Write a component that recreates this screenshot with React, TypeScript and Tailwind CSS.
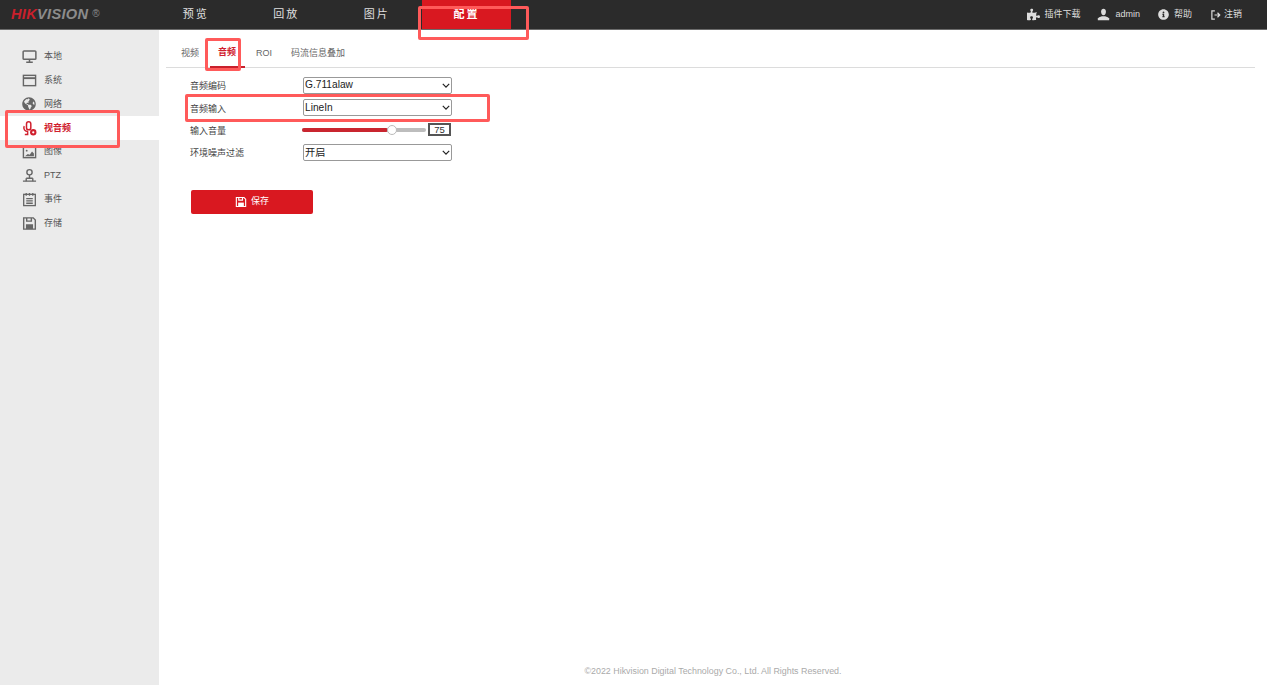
import React from 'react'
import { FaPuzzlePiece, FaInfoCircle, FaGlobeAmericas } from 'react-icons/fa'

const font = "font-['Liberation_Sans','Noto_Sans_CJK_SC',sans-serif]"

const iconCls = 'w-[15px] h-[15px]'

function Monitor() {
  return (
    <svg viewBox="0 0 16 16" className={iconCls} fill="none" stroke="#666" strokeWidth="1.6">
      <rect x="1.2" y="2" width="13.6" height="9" rx="1" />
      <path d="M8 11v2.4M4.5 14h7" />
    </svg>
  )
}

function WindowIcon() {
  return (
    <svg viewBox="0 0 16 16" className={iconCls} fill="none" stroke="#666" strokeWidth="1.5">
      <rect x="1.5" y="2.5" width="13" height="11" />
      <path d="M1.5 5.5h13" strokeWidth="2" />
    </svg>
  )
}

function Mic() {
  return (
    <svg viewBox="0 0 16 16" className={iconCls} fill="none" stroke="#d0202e" strokeWidth="1.6">
      <rect x="4.8" y="0.8" width="4.6" height="8.6" rx="2.3" />
      <path d="M2.4 5.5c-1.4 3 .6 5.6 4 5.6M6 11v3.5H3" />
      <circle cx="12" cy="12" r="3.4" fill="#d0202e" stroke="none" />
      <circle cx="12" cy="12" r="1.2" fill="#fff" stroke="none" />
    </svg>
  )
}

function ImageIcon() {
  return (
    <svg viewBox="0 0 16 16" className={iconCls} fill="none" stroke="#666" strokeWidth="1.5">
      <rect x="1.5" y="2.5" width="13" height="11" />
      <circle cx="5" cy="6" r="1" fill="#666" stroke="none" />
      <path d="M3.2 12l3-2.5 2 1 2.5-3.5 2 2V12z" fill="#666" stroke="none" />
    </svg>
  )
}

function Ptz() {
  return (
    <svg viewBox="0 0 16 16" className={iconCls} fill="none" stroke="#666" strokeWidth="1.5">
      <circle cx="8" cy="4.5" r="2.8" />
      <path d="M8 7.5v3M4.5 11h7M1 14h14" />
      <path d="M4.5 11v3M11.5 11v3" />
    </svg>
  )
}

function Calendar() {
  return (
    <svg viewBox="0 0 16 16" className={iconCls} fill="none" stroke="#666" strokeWidth="1.4">
      <rect x="1.8" y="2.5" width="12.4" height="12" />
      <path d="M4.5 1v3M8 1v3M11.5 1v3M4.5 7h7M4.5 9.5h7M4.5 12h7" />
    </svg>
  )
}

function Disk({ color = '#666', className = iconCls }: { color?: string; className?: string }) {
  return (
    <svg viewBox="0 0 16 16" className={className} fill="none" stroke={color} strokeWidth="1.5">
      <path d="M1.8 2h10.2l2.2 2.2v9.8H1.8z" />
      <path d="M5 2v3.5h5V2" />
      <rect x="4.2" y="8.8" width="7.6" height="5.2" fill={color} stroke="none" />
    </svg>
  )
}

function UserIcon() {
  return (
    <svg viewBox="0 0 16 16" className="w-[13px] h-[13px]" fill="#ddd">
      <path d="M5 4.5C5 2.5 6.3 1 8 1s3 1.5 3 3.5S9.8 9 8 9 5 6.5 5 4.5z" />
      <path d="M1 15v-2c0-1.4 3-2.4 5-3h4c2 .6 5 1.6 5 3v2z" />
    </svg>
  )
}

function LogoutIcon() {
  return (
    <svg viewBox="0 0 16 16" className="w-[12px] h-[12px]" fill="none" stroke="#ddd" strokeWidth="1.6">
      <path d="M6.5 2.5H2.5v11h4" />
      <path d="M6 8h6.5M10 5l3 3-3 3" />
    </svg>
  )
}

const sideItems = [
  { label: '本地', icon: <Monitor /> },
  { label: '系统', icon: <WindowIcon /> },
  { label: '网络', icon: <FaGlobeAmericas className="w-[14px] h-[14px] text-[#666]" /> },
  { label: '视音频', icon: <Mic />, active: true },
  { label: '图像', icon: <ImageIcon /> },
  { label: 'PTZ', icon: <Ptz /> },
  { label: '事件', icon: <Calendar /> },
  { label: '存储', icon: <Disk /> },
]

const topNav = ['预览', '回放', '图片', '配置']

function Select({ value }: { value: string }) {
  return (
    <div className="relative ml-[1px] w-[149px] h-[17px]">
      <select
        defaultValue={value}
        className="block appearance-none w-full h-full bg-white border border-[#999] rounded-[2px] text-[10.2px] leading-none text-[#222] pl-[1px] pt-[1px] outline-none"
      >
        <option>{value}</option>
      </select>
      <svg viewBox="0 0 10 6" className="absolute right-[2px] top-[6px] w-[8px] h-[5px]" fill="none" stroke="#222" strokeWidth="1.5">
        <path d="M1 1l4 4 4-4" />
      </svg>
    </div>
  )
}

function Row({ label, children }: { label: string; children: React.ReactNode }) {
  return (
    <div className="flex items-center h-[17px] mb-[5.4px]">
      <span className="w-[112px] mt-[4px] text-[9px] text-[#444]">{label}</span>
      {children}
    </div>
  )
}

function App() {
  return (
    <div className={`${font} relative w-[1267px] h-[685px] overflow-hidden bg-white flex flex-col`}>
      <header className="h-[30px] shrink-0 bg-[#2b2b2b] border-b border-[#6b6b6b] flex items-stretch">
        <div className="w-[150.5px] pl-[11px] flex items-center italic font-bold text-[14.6px] tracking-[0.3px]">
          <span className="text-[#c9202c]">HIK</span>
          <span className="text-[#8c8c8c]">VISION</span>
          <span className="text-[#8c8c8c] text-[10px] font-normal not-italic ml-[4px] -mt-[2px]">®</span>
        </div>
        <nav className="flex">
          {topNav.map((t) => (
            <div
              key={t}
              className={`flex items-center justify-center text-[11px] tracking-[2px] ${
                t === '配置' ? 'w-[89px] bg-[#d91820] text-white font-bold h-[29px]' : 'w-[90.5px] text-[#e0e0e0]'
              }`}
            >
              {t}
            </div>
          ))}
        </nav>
        <div className="ml-auto flex items-center pr-[25px] text-[9px] text-[#ddd]">
          <FaPuzzlePiece className="w-[13px] h-[13px] mr-[4px]" />
          <span>插件下载</span>
          <span className="ml-[17px] mr-[5px]"><UserIcon /></span>
          <span>admin</span>
          <FaInfoCircle className="w-[11px] h-[11px] ml-[18px] mr-[5px]" />
          <span>帮助</span>
          <span className="ml-[18px] mr-[2px]"><LogoutIcon /></span>
          <span>注销</span>
        </div>
      </header>

      <div className="flex flex-1 min-h-0">
        <aside className="w-[159px] shrink-0 bg-[#ebebeb] pt-[15px]">
          {sideItems.map((item) => (
            <div
              key={item.label}
              className={`h-[23.8px] flex items-center pl-[22px] text-[9px] ${
                item.active ? 'bg-white text-[#d0202e] font-bold' : 'text-[#555]'
              }`}
            >
              <span className="w-[22px] flex items-center">{item.icon}</span>
              {item.label}
            </div>
          ))}
        </aside>

        <main className="flex-1 flex flex-col min-w-0">
          <div className="ml-[7px] mr-[12px] mt-[8px] h-[30px] border-b border-[#dcdcdc] flex items-stretch text-[9px] text-[#666]">
            <span className="ml-[15px] w-[29px] pt-[9px]">视频</span>
            <span className="w-[35px] pl-[8px] pt-[8px] text-[#d0202e] font-bold border-b-2 border-[#c9202c] h-[30px]">音频</span>
            <span className="ml-[11px] w-[35px] pt-[9px]">ROI</span>
            <span className="pt-[9px]">码流信息叠加</span>
          </div>

          <div className="pl-[31px] pt-[8.5px]">
            <Row label="音频编码">
              <Select value="G.711alaw" />
            </Row>
            <Row label="音频输入">
              <Select value="LineIn" />
            </Row>
            <Row label="输入音量">
              <div className="relative w-[124px] h-[4px] bg-[#bdbdbd] rounded-full">
                <div className="w-[86px] h-full bg-[#c9252f] rounded-full" />
                <div className="absolute left-[85px] -top-[3px] w-[10px] h-[10px] bg-white border border-[#bbb] rounded-full" />
              </div>
              <div className="ml-[2px] w-[23px] h-[13px] border-2 border-[#555] flex items-center justify-center text-[9.5px] text-[#333]">75</div>
            </Row>
            <Row label="环境噪声过滤">
              <Select value="开启" />
            </Row>
            <button className="ml-[1px] mt-[29px] w-[122px] h-[24px] bg-[#d91820] rounded-[2px] text-white text-[9px] flex items-center justify-center gap-[4px]">
              <Disk color="#fff" className="w-[12px] h-[12px]" />
              保存
            </button>
          </div>

          <footer className="mt-auto mb-[7px] text-center text-[8.9px] text-[#aaa]">
            ©2022 Hikvision Digital Technology Co., Ltd. All Rights Reserved.
          </footer>
        </main>
      </div>

      {/* red annotation boxes drawn over the screenshot */}
      <div className="absolute left-[418px] top-[6px] w-[111px] h-[34px] border-[3px] border-[#ff5a5a] rounded-[2px]" />
      <div className="absolute left-[205px] top-[38px] w-[36px] h-[33px] border-[3px] border-[#ff5a5a] rounded-[2px]" />
      <div className="absolute left-[185px] top-[94px] w-[305px] h-[28px] border-[3px] border-[#ff5a5a] rounded-[2px]" />
      <div className="absolute left-[5px] top-[110px] w-[115px] h-[38px] border-[3px] border-[#ff5a5a] rounded-[2px]" />
    </div>
  )
}

export default App
